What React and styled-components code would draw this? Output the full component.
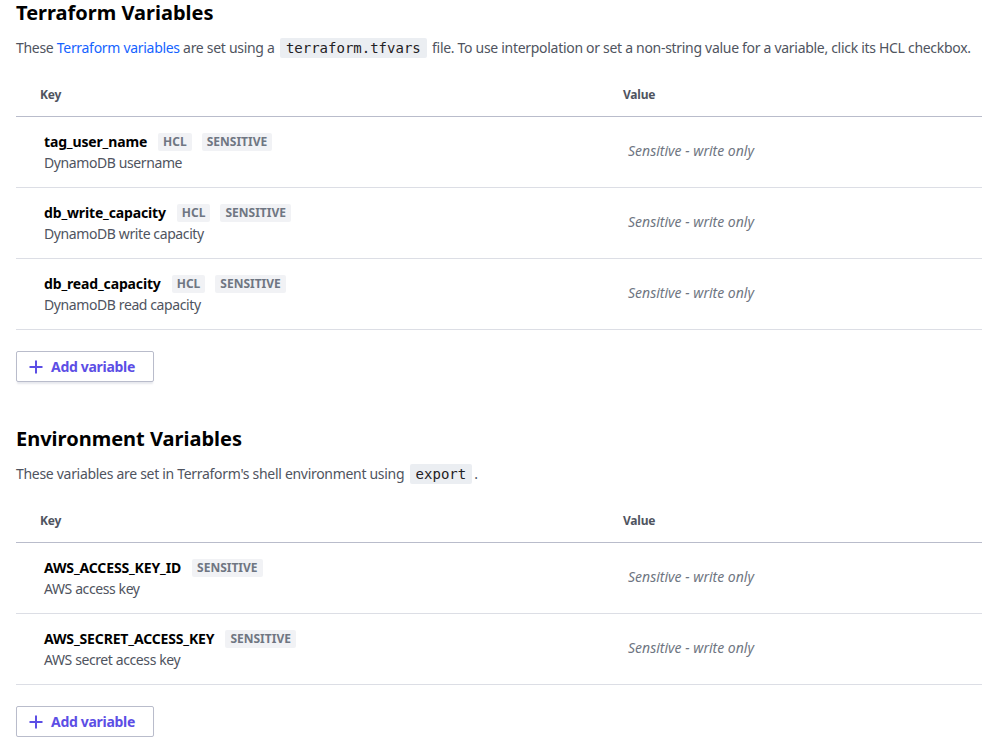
import React from 'react'
import styled, {createGlobalStyle} from 'styled-components'

const COLORS = {
  BLACK: '#000000',
  TEXT: '#4f5460',
  MUTED: '#6f7682',
  LINK: '#1563ff',
  PURPLE: '#5c4ee5',
  BORDER: '#b9bccb',
  ROW_BORDER: '#dcdee5',
  BADGE_BG: '#f1f2f5',
  CODE_BG: '#ebeef2',
  WHITE: '#ffffff',
}

const FONT = `'Noto Sans', 'Open Sans', sans-serif`
const MONO = `'DejaVu Sans Mono', 'Liberation Mono', monospace`

const GlobalStyle = createGlobalStyle`
  html, body {
    margin: 0;
    padding: 0;
    overflow: hidden;
    background: ${COLORS.WHITE};
  }
  body {
    font-family: ${FONT};
    color: ${COLORS.TEXT};
  }
`

const Page = styled.div`
  padding: 0 0 0 16px;
  display: flex;
  flex-direction: column;
`

const Section = styled.section`
  display: flex;
  flex-direction: column;
  margin-bottom: ${(props) => props.spacing ?? 0}px;
`

const Title = styled.h2`
  margin: 0;
  font-size: 20px;
  line-height: 26px;
  font-weight: 700;
  color: ${COLORS.BLACK};
`

const Description = styled.p`
  margin: 10px 0 0;
  font-size: 14px;
  line-height: 24px;
  letter-spacing: -0.3px;
  white-space: nowrap;
  color: ${COLORS.TEXT};

  a {
    color: ${COLORS.LINK};
    text-decoration: none;
  }
`

const Code = styled.code`
  font-family: ${MONO};
  font-size: 14px;
  letter-spacing: 0;
  background: ${COLORS.CODE_BG};
  color: #1f2124;
  padding: 2px 6px;
  margin: 0 2px;
  border-radius: 2px;
`

const Table = styled.div`
  margin-top: 27px;
  display: flex;
  flex-direction: column;
`

const HeaderRow = styled.div`
  display: grid;
  grid-template-columns: 591px 1fr;
  height: 29px;
  align-items: start;
  border-bottom: 1px solid ${COLORS.BORDER};
`

const HeaderCell = styled.div`
  font-size: 12px;
  line-height: 16px;
  font-weight: 700;
  letter-spacing: -0.2px;
  color: ${COLORS.TEXT};
  padding-left: ${(props) => props.pad ?? 24}px;
`

const Row = styled.div`
  display: grid;
  grid-template-columns: 591px 1fr;
  height: 70px;
  align-items: center;
  border-bottom: 1px solid ${COLORS.ROW_BORDER};
`

const KeyCell = styled.div`
  padding-left: 28px;
  display: flex;
  flex-direction: column;
  gap: 1px;
`

const NameLine = styled.div`
  display: flex;
  align-items: center;
  gap: 10px;
`

const Name = styled.span`
  font-size: 14px;
  line-height: 20px;
  font-weight: 700;
  letter-spacing: -0.15px;
  color: ${COLORS.BLACK};
  margin-right: 1px;
`

const Badge = styled.span`
  font-size: 12px;
  line-height: 18px;
  font-weight: 700;
  color: ${COLORS.MUTED};
  background: ${COLORS.BADGE_BG};
  padding: 0 5px;
  border-radius: 2px;
`

const Hint = styled.span`
  font-size: 14px;
  line-height: 20px;
  letter-spacing: -0.4px;
  color: ${COLORS.TEXT};
`

const ValueCell = styled.div`
  padding-left: 21px;
  padding-bottom: 3px;
  font-size: 14px;
  font-style: italic;
  color: ${COLORS.MUTED};
`

const AddButton = styled.button`
  margin-top: 21px;
  align-self: flex-start;
  display: flex;
  align-items: center;
  gap: 8px;
  height: 31px;
  width: 138px;
  padding: 0 12px;
  border: 1px solid ${COLORS.BORDER};
  border-radius: 2px;
  background: ${COLORS.WHITE};
  box-shadow: 0 3px 2px -1px rgba(185, 188, 203, 0.35);
  font-family: ${FONT};
  font-size: 14px;
  font-weight: 700;
  letter-spacing: -0.3px;
  color: ${COLORS.PURPLE};
  cursor: pointer;
`

const PlusIcon = () => (
  <svg width="14" height="14" viewBox="0 0 14 14" fill="none">
    <path d="M7 0.5v13M0.5 7h13" stroke={COLORS.PURPLE} strokeWidth="2" />
  </svg>
)

const terraformVars = [
  {name: 'tag_user_name', hint: 'DynamoDB username', hcl: true},
  {name: 'db_write_capacity', hint: 'DynamoDB write capacity', hcl: true},
  {name: 'db_read_capacity', hint: 'DynamoDB read capacity', hcl: true},
]

const envVars = [
  {name: 'AWS_ACCESS_KEY_ID', hint: 'AWS access key'},
  {name: 'AWS_SECRET_ACCESS_KEY', hint: 'AWS secret access key'},
]

const VariableTable = ({vars}) => (
  <Table>
    <HeaderRow>
      <HeaderCell>Key</HeaderCell>
      <HeaderCell pad={16}>Value</HeaderCell>
    </HeaderRow>
    {vars.map((v) => (
      <Row key={v.name}>
        <KeyCell>
          <NameLine>
            <Name>{v.name}</Name>
            {v.hcl && <Badge>HCL</Badge>}
            <Badge>SENSITIVE</Badge>
          </NameLine>
          <Hint>{v.hint}</Hint>
        </KeyCell>
        <ValueCell>Sensitive - write only</ValueCell>
      </Row>
    ))}
  </Table>
)

const App = () => (
  <>
    <GlobalStyle />
    <Page>
      <Section spacing={44}>
        <Title>Terraform Variables</Title>
        <Description>
          These <a href="#">Terraform variables</a> are set using a{' '}
          <Code>terraform.tfvars</Code> file. To use interpolation or set a
          non-string value for a variable, click its HCL checkbox.
        </Description>
        <VariableTable vars={terraformVars} />
        <AddButton>
          <PlusIcon />
          Add variable
        </AddButton>
      </Section>
      <Section>
        <Title>Environment Variables</Title>
        <Description>
          These variables are set in Terraform's shell environment using{' '}
          <Code>export</Code>.
        </Description>
        <VariableTable vars={envVars} />
        <AddButton>
          <PlusIcon />
          Add variable
        </AddButton>
      </Section>
    </Page>
  </>
)

export default App
